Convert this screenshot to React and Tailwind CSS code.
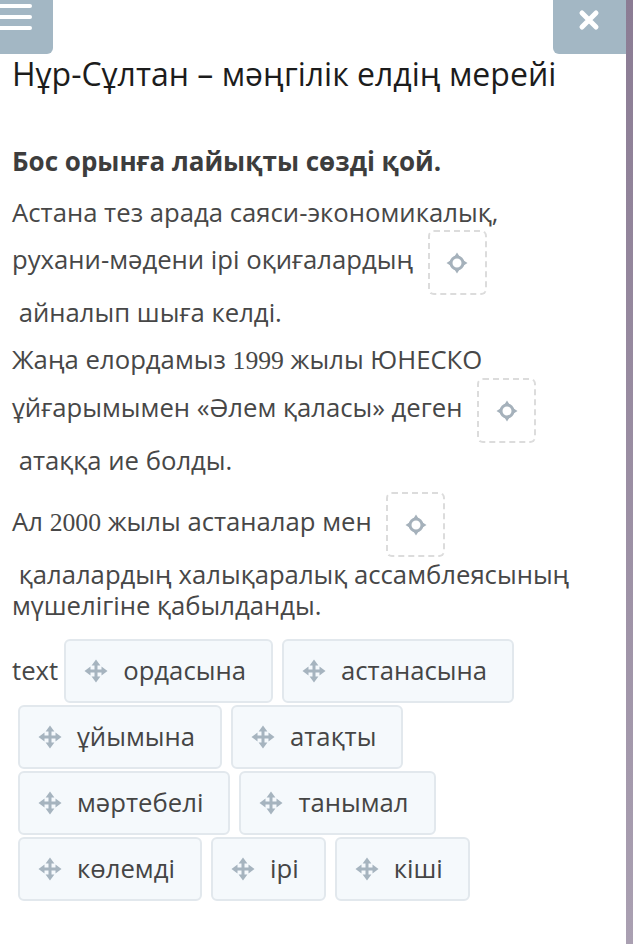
import React from 'react';

const MoveIcon = () => (
  <svg viewBox="0 0 24 24" width="24" height="24" className="shrink-0" fill="#a6b4bf">
    <path d="M12 5v14M5 12h14" stroke="#a6b4bf" strokeWidth="3" />
    <path d="M12 0.5 7.6 6.5h8.8zM12 23.5l-4.4-6h8.8zM0.5 12l6-4.4v8.8zM23.5 12l-6-4.4v8.8z" />
  </svg>
);

const TargetIcon = () => (
  <svg viewBox="0 0 24 24" width="24" height="24" fill="#a5b1bb">
    <circle cx="12" cy="12" r="6" fill="none" stroke="#a5b1bb" strokeWidth="3" />
    <path d="M12 1.5 8.8 6.5h6.4zM12 22.5l-3.2-5h6.4zM1.5 12l5-3.2v6.4zM22.5 12l-5-3.2v6.4z" />
  </svg>
);

const DropZone = () => (
  <span className="inline-flex align-middle items-center justify-center w-[59px] h-[65px] ml-[8px] my-[2px] rounded-md border-2 border-dashed border-[#dcdcdc] bg-white">
    <TargetIcon />
  </span>
);

const Num = ({ children }) => (
  <span className="font-['Liberation_Serif','Times_New_Roman',serif]">{children}</span>
);

const Tile = ({ word }) => (
  <div className="flex items-center h-[64px] pl-[18px] pr-[25px] ml-[6px] mr-[3px] my-px rounded-md border-2 border-[#e2e8ed] bg-[#f5f9fc] text-[25.7px] text-[#454545]">
    <MoveIcon />
    <span className="ml-[15px]">{word}</span>
  </div>
);

const words = ['ордасына', 'астанасына', 'ұйымына', 'атақты', 'мәртебелі', 'танымал', 'көлемді', 'ірі', 'кіші'];

export default function App() {
  return (
    <div className="flex min-h-screen bg-white font-['Open_Sans','Noto_Sans',sans-serif]">
      <div className="flex-1 flex flex-col">
        <div className="flex justify-between">
          <div className="w-[53px] h-[54px] rounded-br-md bg-[#a3b7c4] pt-[4px] flex flex-col gap-[7px]">
            <div className="w-[32px] h-[4px] bg-white rounded-r-sm" />
            <div className="w-[32px] h-[4px] bg-white rounded-r-sm" />
            <div className="w-[32px] h-[4px] bg-white rounded-r-sm" />
          </div>
          <div className="w-[73px] h-[54px] rounded-bl-md bg-[#a3b7c4] flex justify-center pt-[8px] pr-[1px]">
            <svg viewBox="0 0 24 24" width="24" height="24">
              <path d="M5 5l14 14M19 5 5 19" stroke="#fff" strokeWidth="5" strokeLinecap="round" />
            </svg>
          </div>
        </div>

        <h1 className="px-3 -mt-[2px] text-[32px] leading-[44px] text-[#1c1c1c] font-normal">
          Нұр-Сұлтан – мәңгілік елдің мерейі
        </h1>

        <p className="px-3 mt-[49px] text-[26px] leading-[32px] font-bold text-[#3d3d3d]">
          Бос орынға лайықты сөзді қой.
        </p>

        <div className="px-3 mt-[20px] text-[25.7px] leading-[31px] text-[#474747]">
          <div>
            Астана тез арада саяси-экономикалық,
            <br />
            рухани-мәдени ірі оқиғалардың <DropZone />
            <br />
            {'\u00a0'}айналып шыға келді.
          </div>
          <div className="mt-[16px]">
            Жаңа елордамыз <Num>1999</Num> жылы ЮНЕСКО
            <br />
            ұйғарымымен «Әлем қаласы» деген <DropZone />
            <br />
            {'\u00a0'}атаққа ие болды.
          </div>
          <div className="mt-[14px]">
            Ал <Num>2000</Num> жылы астаналар мен <DropZone />
            <br />
            {'\u00a0'}қалалардың халықаралық ассамблеясының
            <br />
            мүшелігіне қабылданды.
          </div>
        </div>

        <div className="px-3 mt-[17px] flex flex-wrap items-center">
          <span className="text-[25.7px] text-[#474747]">text</span>
          {words.slice(0, 2).map((w) => (
            <Tile key={w} word={w} />
          ))}
        </div>
        <div className="px-3 flex flex-wrap">
          {words.slice(2, 4).map((w) => (
            <Tile key={w} word={w} />
          ))}
        </div>
        <div className="px-3 flex flex-wrap">
          {words.slice(4, 6).map((w) => (
            <Tile key={w} word={w} />
          ))}
        </div>
        <div className="px-3 flex flex-wrap">
          {words.slice(6).map((w) => (
            <Tile key={w} word={w} />
          ))}
        </div>
      </div>
      <div className="w-[7px] bg-gradient-to-b from-[#8b7c94] to-[#aaa0b2]" />
    </div>
  );
}
